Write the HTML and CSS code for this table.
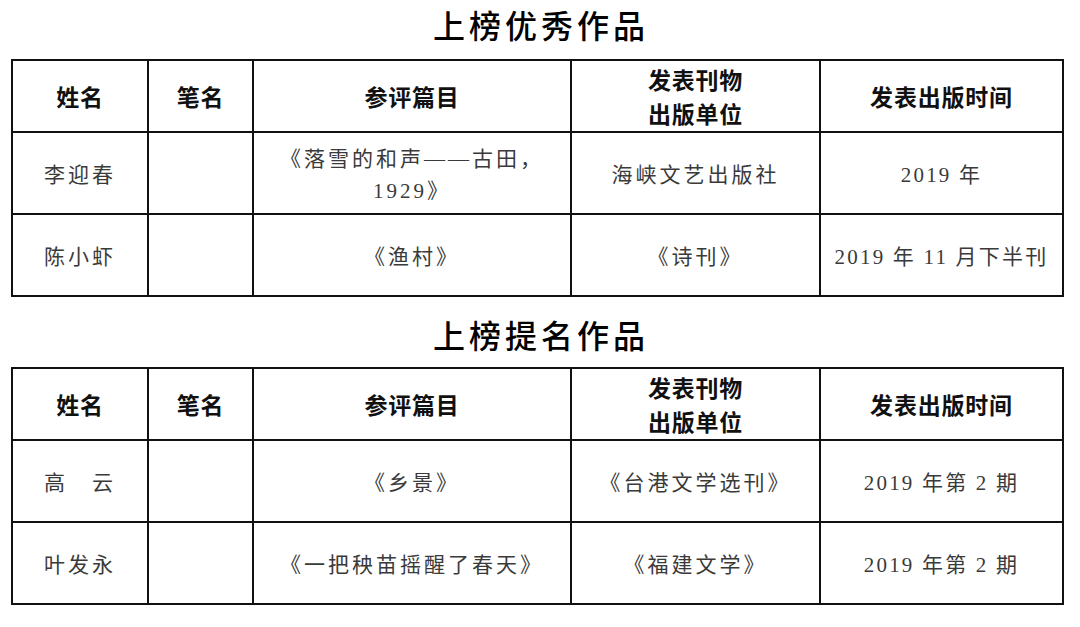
FILE: index.html
```html
<!DOCTYPE html>
<html lang="zh-CN">
<head>
<meta charset="utf-8">
<title>上榜作品</title>
<link rel="stylesheet" href="styles.css">
</head>
<body>
<div class="page">
  <h2 class="title title-first">上榜优秀作品</h2>
  <table class="list">
    <colgroup>
      <col class="c1"><col class="c2"><col class="c3"><col class="c4"><col class="c5">
    </colgroup>
    <tr class="head">
      <th>姓名</th><th>笔名</th><th>参评篇目</th><th>发表刊物<br>出版单位</th><th>发表出版时间</th>
    </tr>
    <tr class="row">
      <td>李迎春</td><td></td><td class="two">《落雪的和声——古田，<br>1929》</td><td>海峡文艺出版社</td><td class="date">2019 年</td>
    </tr>
    <tr class="row">
      <td>陈小虾</td><td></td><td>《渔村》</td><td>《诗刊》</td><td class="date">2019 年 11 月下半刊</td>
    </tr>
  </table>

  <h2 class="title title-second">上榜提名作品</h2>
  <table class="list">
    <colgroup>
      <col class="c1"><col class="c2"><col class="c3"><col class="c4"><col class="c5">
    </colgroup>
    <tr class="head">
      <th>姓名</th><th>笔名</th><th>参评篇目</th><th>发表刊物<br>出版单位</th><th>发表出版时间</th>
    </tr>
    <tr class="row">
      <td>高　云</td><td></td><td>《乡景》</td><td>《台港文学选刊》</td><td class="date">2019 年第 2 期</td>
    </tr>
    <tr class="row">
      <td>叶发永</td><td></td><td>《一把秧苗摇醒了春天》</td><td>《福建文学》</td><td class="date">2019 年第 2 期</td>
    </tr>
  </table>
</div>
</body>
</html>
```

FILE: styles.css
```css
html, body {
  margin: 0;
  padding: 0;
  background: #ffffff;
}

.page {
  padding-left: 11px;
  width: 1056px;
}

.title {
  margin: 0;
  height: 48px;
  line-height: 48px;
  text-align: center;
  font-family: "Noto Sans CJK SC", sans-serif;
  font-weight: 500;
  font-size: 32px;
  letter-spacing: 4px;
  padding-left: 4px;
  color: #000;
}

.title-first {
  margin-bottom: 11px;
}

.title-second {
  margin-top: 13px;
  margin-bottom: 9px;
}

.list {
  border-collapse: collapse;
  table-layout: fixed;
  width: 1053px;
}

.c1 { width: 136px; }
.c2 { width: 105px; }
.c3 { width: 318px; }
.c4 { width: 249px; }
.c5 { width: 243px; }

.list th,
.list td {
  border: 2px solid #111;
  padding: 0;
  text-align: center;
  vertical-align: middle;
}

.head {
  height: 72px;
}

.head th {
  font-family: "Noto Sans CJK SC", sans-serif;
  font-weight: 700;
  font-size: 23px;
  line-height: 34px;
  letter-spacing: 0.8px;
  color: #111;
}

.row {
  height: 82px;
}

.row td {
  font-family: "Liberation Serif", "Noto Sans CJK SC", serif;
  font-weight: 400;
  font-size: 21px;
  line-height: 32px;
  letter-spacing: 3px;
  color: #3a3a3a;
  padding-top: 4px;
}

.row td.date {
  letter-spacing: 2.2px;
}
```
